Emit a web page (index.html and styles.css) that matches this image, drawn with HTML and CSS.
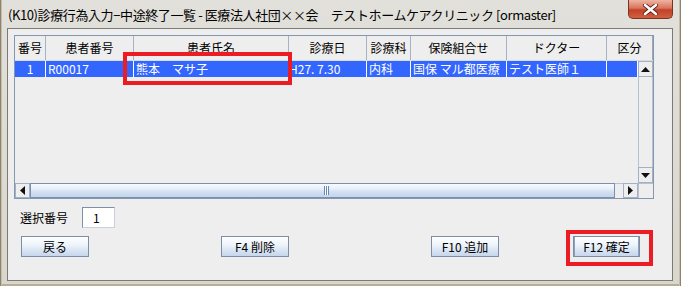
FILE: index.html
```html
<!DOCTYPE html>
<html lang="ja">
<head>
  <meta charset="UTF-8">
  <title>(K10)診療行為入力−中途終了一覧</title>
  <link rel="stylesheet" href="styles.css">
</head>
<body>
  <div class="window">
    <div class="titlebar">
      <span class="title">(K10)診療行為入力−中途終了一覧 - 医療法人社団××会　テストホームケアクリニック [ormaster]</span>
      <span class="close">
        <svg width="17" height="11" viewBox="0 0 17 11">
          <path d="M3 1 L14 10 M14 1 L3 10" stroke="#5a1e14" stroke-width="4.2" stroke-linecap="round"/>
          <path d="M3 1 L14 10 M14 1 L3 10" stroke="#ffffff" stroke-width="2.6" stroke-linecap="round"/>
        </svg>
      </span>
    </div>

    <div class="client">
      <div class="table">
        <div class="thead">
          <div class="th w1">番号</div>
          <div class="th w2">患者番号</div>
          <div class="th w3">患者氏名</div>
          <div class="th w4">診療日</div>
          <div class="th w5">診療科</div>
          <div class="th w6">保険組合せ</div>
          <div class="th w7">ドクター</div>
          <div class="th w8 last">区分</div>
        </div>
        <div class="tbody">
          <div class="rows">
            <div class="tr sel">
              <div class="td w1 center">1</div>
              <div class="td w2">R00017</div>
              <div class="td w3">熊本　マサ子</div>
              <div class="td w4 tight">H27. 7.30</div>
              <div class="td w5">内科</div>
              <div class="td w6">国保 マル都医療</div>
              <div class="td w7">テスト医師１</div>
              <div class="td w8s"></div>
            </div>
          </div>
          <div class="vscroll">
            <div class="sbtn">
              <svg width="9" height="5" viewBox="0 0 9 5"><path d="M0 5 L4.5 0 L9 5 Z" fill="#111"/></svg>
            </div>
            <div class="vtrack"></div>
            <div class="sbtn">
              <svg width="9" height="5" viewBox="0 0 9 5"><path d="M0 0 L9 0 L4.5 5 Z" fill="#111"/></svg>
            </div>
          </div>
          <div class="hscroll">
            <div class="sbtn">
              <svg width="5" height="9" viewBox="0 0 5 9"><path d="M5 0 L5 9 L0 4.5 Z" fill="#111"/></svg>
            </div>
            <div class="hthumb"><span class="grip"></span></div>
            <div class="htrack"></div>
            <div class="sbtn">
              <svg width="5" height="9" viewBox="0 0 5 9"><path d="M0 0 L5 4.5 L0 9 Z" fill="#111"/></svg>
            </div>
          </div>
          <div class="corner"></div>
        </div>
      </div>

      <div class="field-row">
        <span class="label">選択番号</span>
        <span class="input">1</span>
      </div>

      <div class="button-row">
        <button class="btn b-back">戻る</button>
        <button class="btn b-del">F4 削除</button>
        <button class="btn b-add">F10 追加</button>
        <button class="btn b-ok focus">F12 確定</button>
      </div>
    </div>

    <div class="mark mark-name"></div>
    <div class="mark mark-ok"></div>
  </div>
</body>
</html>
```

FILE: styles.css
```css
body {
  margin: 0;
  font-family: "Noto Sans CJK JP", "Noto Sans", sans-serif;
  font-size: 12px;
  color: #000;
}
.window {
  position: relative;
  width: 681px;
  height: 286px;
  box-sizing: border-box;
  display: flex;
  flex-direction: column;
  background: linear-gradient(#e2e0da, #d9d6ce);
  box-shadow: inset 1px 0 #8c8472, inset 2px 0 #c8bea6, inset -1px 0 #8c8472, inset -2px 0 #c8bea6, inset 0 -2px #b8ae96;
}
.titlebar {
  height: 28px;
  display: flex;
  align-items: flex-start;
  padding-left: 8px;
}
.title {
  font-size: 13px;
  line-height: 30px;
  white-space: nowrap;
  letter-spacing: -0.4px;
}
.close {
  margin-left: auto;
  margin-right: 8px;
  width: 45px;
  height: 19px;
  box-sizing: border-box;
  border: 1px solid #7a3224;
  border-top: none;
  border-radius: 0 0 5px 5px;
  background: linear-gradient(#eeb4a2, #d9745c 45%, #c2412a 55%, #d0603e);
  display: flex;
  align-items: center;
  justify-content: center;
}
.client {
  flex: 1;
  margin: 0 8px 5px 7px;
  border: 1px solid #7c7a74;
  background: #eeeeee;
  padding: 6px 0 0 6px;
}

/* table */
.table {
  width: 640px;
  height: 164px;
  box-sizing: border-box;
  border: 1px solid #8496b0;
  background: #eeeeee;
}
.thead {
  display: flex;
  height: 25px;
  box-sizing: border-box;
  border-bottom: 1px solid #d6dce4;
}
.th {
  box-sizing: border-box;
  border-right: 1px solid #a7b3c4;
  text-align: center;
  line-height: 24px;
  white-space: nowrap;
}
.th.last { border-right: 1px solid #9aa8bc; }
.w1 { width: 31px; }
.w2 { width: 88px; }
.w3 { width: 155px; }
.w4 { width: 78px; }
.w5 { width: 44px; }
.w6 { width: 96px; }
.w7 { width: 100px; }
.w8 { width: 46px; }
.w8s { width: 31px; }
.tbody {
  display: grid;
  grid-template-columns: 623px 15px;
  grid-template-rows: 122px 15px;
}
.tr {
  display: flex;
  height: 16px;
}
.tr.sel {
  background: #3366ff;
  color: #fff;
}
.td {
  box-sizing: border-box;
  border-right: 1px solid #ffffff;
  line-height: 16px;
  padding-left: 2px;
  white-space: nowrap;
  overflow: hidden;
}
.td.center { text-align: center; padding-left: 0; }
.td.tight { padding-left: 0; }

/* scroll bars */
.sbtn {
  width: 15px;
  height: 15px;
  box-sizing: border-box;
  border: 1px solid #a3b1c6;
  background: #eeeeee;
  display: flex;
  align-items: center;
  justify-content: center;
  flex: none;
}
.vscroll {
  display: flex;
  flex-direction: column;
}
.vscroll .sbtn { height: 16px; }
.vtrack {
  flex: 1;
  border-left: 1px solid #b6c2d2;
  border-right: 1px solid #b6c2d2;
  background: #eeeeee;
}
.hscroll {
  display: flex;
}
.hthumb {
  width: 585px;
  box-sizing: border-box;
  border: 1px solid #7b8fae;
  background: linear-gradient(#f8fbff, #e8f0fa 35%, #d2e0f0 60%, #c4d6ec);
  display: flex;
  align-items: center;
  justify-content: center;
}
.grip {
  width: 5px;
  height: 9px;
  margin-left: 8px;
  background: repeating-linear-gradient(90deg, #6b84b6 0 1px, #ffffff 1px 2px);
}
.htrack {
  flex: 1;
  background: #eeeeee;
  border-top: 1px solid #b6c2d2;
}
.corner {
  border-left: 1px solid #b6c2d2;
  border-top: 1px solid #b6c2d2;
  background: #eeeeee;
}

/* form */
.field-row {
  display: flex;
  align-items: center;
  margin-top: 8px;
  height: 21px;
}
.label {
  margin-left: 6px;
  width: 62px;
}
.input {
  width: 33px;
  height: 21px;
  box-sizing: border-box;
  border: 1px solid #7e8fa8;
  border-right-color: #c8d0dc;
  border-bottom-color: #c8d0dc;
  background: #fff;
  padding-left: 10px;
  line-height: 19px;
}
.button-row {
  display: flex;
  margin-top: 8px;
}
.btn {
  height: 21px;
  width: 68px;
  box-sizing: border-box;
  padding: 0;
  border: 1px solid #7c8ea6;
  border-radius: 0;
  background: linear-gradient(#ffffff, #eef4fb 40%, #d6e2f1 75%, #c6d6ec);
  font-family: inherit;
  font-size: 12px;
  color: #000;
  line-height: 19px;
}
.b-back { margin-left: 7px; }
.b-del { margin-left: 132px; }
.b-add { margin-left: 142px; }
.b-ok { margin-left: 74px; width: 67px; }
.btn.focus {
  box-shadow: inset 8px 0 0 -7px #8fa2bc, inset -8px 0 0 -7px #8fa2bc;
}

/* red annotation boxes */
.mark {
  position: absolute;
  border: 4px solid #ec1c24;
  box-sizing: border-box;
}
.mark-name {
  left: 123px;
  top: 52px;
  width: 169px;
  height: 33px;
}
.mark-ok {
  left: 566px;
  top: 230px;
  width: 87px;
  height: 36px;
}
```
